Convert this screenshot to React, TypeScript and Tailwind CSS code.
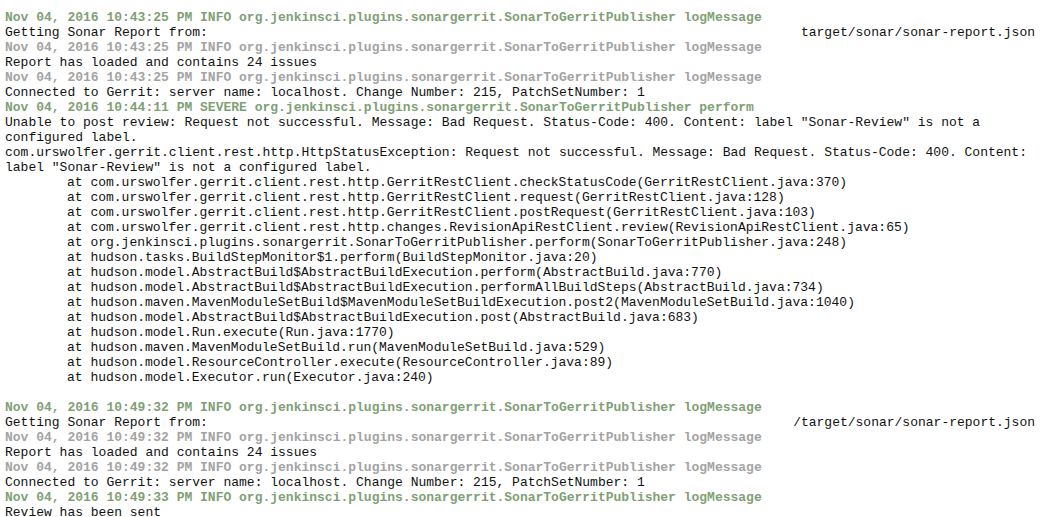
type Line =
  | { kind: "head"; tone: "green" | "gray"; text: string }
  | { kind: "msg"; text: string; right?: string }
  | { kind: "at"; text: string }
  | { kind: "blank" };

const pkg = "org.jenkinsci.plugins.sonargerrit.SonarToGerritPublisher";

const lines: Line[] = [
  { kind: "head", tone: "green", text: `Nov 04, 2016 10:43:25 PM INFO ${pkg} logMessage` },
  { kind: "msg", text: "Getting Sonar Report from:", right: "target/sonar/sonar-report.json" },
  { kind: "head", tone: "gray", text: `Nov 04, 2016 10:43:25 PM INFO ${pkg} logMessage` },
  { kind: "msg", text: "Report has loaded and contains 24 issues" },
  { kind: "head", tone: "gray", text: `Nov 04, 2016 10:43:25 PM INFO ${pkg} logMessage` },
  { kind: "msg", text: "Connected to Gerrit: server name: localhost. Change Number: 215, PatchSetNumber: 1" },
  { kind: "head", tone: "green", text: `Nov 04, 2016 10:44:11 PM SEVERE ${pkg} perform` },
  {
    kind: "msg",
    text: 'Unable to post review: Request not successful. Message: Bad Request. Status-Code: 400. Content: label "Sonar-Review" is not a',
  },
  { kind: "msg", text: "configured label." },
  {
    kind: "msg",
    text: "com.urswolfer.gerrit.client.rest.http.HttpStatusException: Request not successful. Message: Bad Request. Status-Code: 400. Content:",
  },
  { kind: "msg", text: 'label "Sonar-Review" is not a configured label.' },
  { kind: "at", text: "at com.urswolfer.gerrit.client.rest.http.GerritRestClient.checkStatusCode(GerritRestClient.java:370)" },
  { kind: "at", text: "at com.urswolfer.gerrit.client.rest.http.GerritRestClient.request(GerritRestClient.java:128)" },
  { kind: "at", text: "at com.urswolfer.gerrit.client.rest.http.GerritRestClient.postRequest(GerritRestClient.java:103)" },
  { kind: "at", text: "at com.urswolfer.gerrit.client.rest.http.changes.RevisionApiRestClient.review(RevisionApiRestClient.java:65)" },
  { kind: "at", text: "at org.jenkinsci.plugins.sonargerrit.SonarToGerritPublisher.perform(SonarToGerritPublisher.java:248)" },
  { kind: "at", text: "at hudson.tasks.BuildStepMonitor$1.perform(BuildStepMonitor.java:20)" },
  { kind: "at", text: "at hudson.model.AbstractBuild$AbstractBuildExecution.perform(AbstractBuild.java:770)" },
  { kind: "at", text: "at hudson.model.AbstractBuild$AbstractBuildExecution.performAllBuildSteps(AbstractBuild.java:734)" },
  { kind: "at", text: "at hudson.maven.MavenModuleSetBuild$MavenModuleSetBuildExecution.post2(MavenModuleSetBuild.java:1040)" },
  { kind: "at", text: "at hudson.model.AbstractBuild$AbstractBuildExecution.post(AbstractBuild.java:683)" },
  { kind: "at", text: "at hudson.model.Run.execute(Run.java:1770)" },
  { kind: "at", text: "at hudson.maven.MavenModuleSetBuild.run(MavenModuleSetBuild.java:529)" },
  { kind: "at", text: "at hudson.model.ResourceController.execute(ResourceController.java:89)" },
  { kind: "at", text: "at hudson.model.Executor.run(Executor.java:240)" },
  { kind: "blank" },
  { kind: "head", tone: "green", text: `Nov 04, 2016 10:49:32 PM INFO ${pkg} logMessage` },
  { kind: "msg", text: "Getting Sonar Report from:", right: "/target/sonar/sonar-report.json" },
  { kind: "head", tone: "gray", text: `Nov 04, 2016 10:49:32 PM INFO ${pkg} logMessage` },
  { kind: "msg", text: "Report has loaded and contains 24 issues" },
  { kind: "head", tone: "gray", text: `Nov 04, 2016 10:49:32 PM INFO ${pkg} logMessage` },
  { kind: "msg", text: "Connected to Gerrit: server name: localhost. Change Number: 215, PatchSetNumber: 1" },
  { kind: "head", tone: "green", text: `Nov 04, 2016 10:49:33 PM INFO ${pkg} logMessage` },
  { kind: "msg", text: "Review has been sent" },
];

export default function App() {
  return (
    <div className="min-h-screen bg-white">
      <div className="pt-[10px] pl-[5px] pr-[6px] font-['Liberation_Mono',monospace] text-[13px] leading-[15px] text-[#111] whitespace-pre">
        {lines.map((line, i) => {
          if (line.kind === "blank") return <div key={i} className="h-[15px]" />;
          if (line.kind === "head")
            return (
              <div
                key={i}
                className={line.tone === "green" ? "font-bold text-[#7f9f76]" : "font-bold text-[#a3a3a3]"}
              >
                {line.text}
              </div>
            );
          if (line.kind === "at")
            return (
              <div key={i} className="pl-[62px]">
                {line.text}
              </div>
            );
          return (
            <div key={i} className="flex justify-between">
              <span>{line.text}</span>
              {line.right && <span>{line.right}</span>}
            </div>
          );
        })}
      </div>
    </div>
  );
}
